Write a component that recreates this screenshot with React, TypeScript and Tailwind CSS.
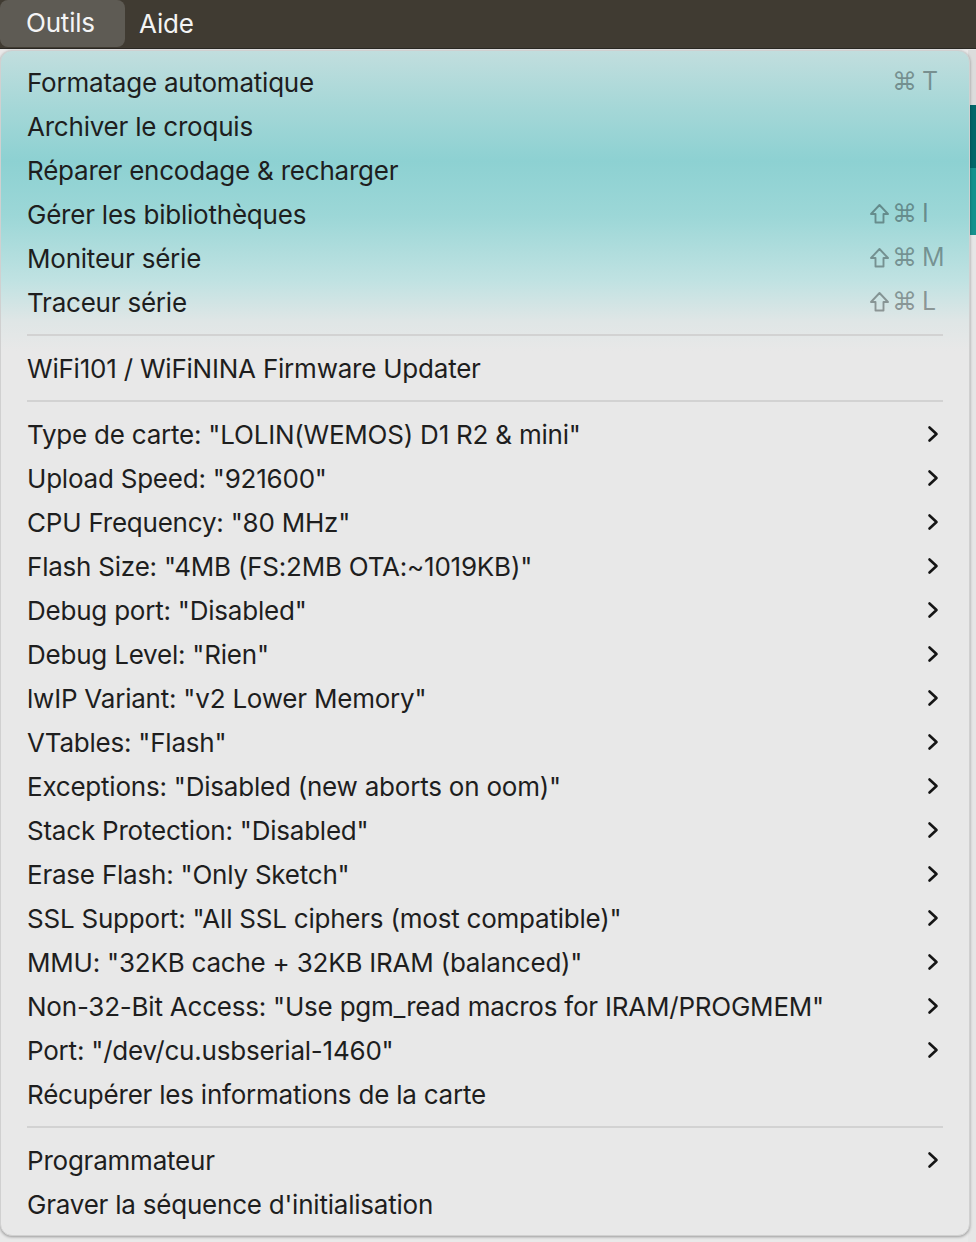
import React from "react";

type Item =
  | { type: "item"; label: string; shortcut?: { shift?: boolean; key: string }; sub?: boolean }
  | { type: "sep" };

const items: Item[] = [
  { type: "item", label: "Formatage automatique", shortcut: { key: "T" } },
  { type: "item", label: "Archiver le croquis" },
  { type: "item", label: "Réparer encodage & recharger" },
  { type: "item", label: "Gérer les bibliothèques", shortcut: { shift: true, key: "I" } },
  { type: "item", label: "Moniteur série", shortcut: { shift: true, key: "M" } },
  { type: "item", label: "Traceur série", shortcut: { shift: true, key: "L" } },
  { type: "sep" },
  { type: "item", label: "WiFi101 / WiFiNINA Firmware Updater" },
  { type: "sep" },
  { type: "item", label: 'Type de carte: "LOLIN(WEMOS) D1 R2 & mini"', sub: true },
  { type: "item", label: 'Upload Speed: "921600"', sub: true },
  { type: "item", label: 'CPU Frequency: "80 MHz"', sub: true },
  { type: "item", label: 'Flash Size: "4MB (FS:2MB OTA:~1019KB)"', sub: true },
  { type: "item", label: 'Debug port: "Disabled"', sub: true },
  { type: "item", label: 'Debug Level: "Rien"', sub: true },
  { type: "item", label: 'lwIP Variant: "v2 Lower Memory"', sub: true },
  { type: "item", label: 'VTables: "Flash"', sub: true },
  { type: "item", label: 'Exceptions: "Disabled (new aborts on oom)"', sub: true },
  { type: "item", label: 'Stack Protection: "Disabled"', sub: true },
  { type: "item", label: 'Erase Flash: "Only Sketch"', sub: true },
  { type: "item", label: 'SSL Support: "All SSL ciphers (most compatible)"', sub: true },
  { type: "item", label: 'MMU: "32KB cache + 32KB IRAM (balanced)"', sub: true },
  { type: "item", label: 'Non-32-Bit Access: "Use pgm_read macros for IRAM/PROGMEM"', sub: true },
  { type: "item", label: 'Port: "/dev/cu.usbserial-1460"', sub: true },
  { type: "item", label: "Récupérer les informations de la carte" },
  { type: "sep" },
  { type: "item", label: "Programmateur", sub: true },
  { type: "item", label: "Graver la séquence d'initialisation" },
];

function Chevron() {
  return (
    <svg width="14" height="20" viewBox="0 0 14 20" className="block">
      <path d="M3.5 3.5 L10.5 10 L3.5 16.5" fill="none" stroke="#151515" strokeWidth="2.6" strokeLinecap="round" strokeLinejoin="round" />
    </svg>
  );
}

function ShiftIcon() {
  return (
    <svg width="21" height="22" viewBox="0 0 21 22" className="block">
      <path d="M10.5 2 L19 11 L14.5 11 L14.5 19.5 L6.5 19.5 L6.5 11 L2 11 Z" fill="none" stroke="currentColor" strokeWidth="1.9" strokeLinejoin="round" />
    </svg>
  );
}

export default function App() {
  return (
    <div
      className="w-[976px] h-[1242px] bg-[#e9e9e9] relative overflow-hidden"
      style={{ fontFamily: "Inter, 'Noto Sans', sans-serif" }}
    >
      {/* menubar */}
      <div className="h-[49px] bg-[#403b32] flex items-stretch border-b border-[#2a2823]">
        <div className="w-[125px] h-[47px] rounded-[8px] bg-[#5e5b54] flex items-center pl-[26px] pb-[2px] text-[26px] tracking-[-0.2px] text-[#f4f4f4]">
          Outils
        </div>
        <div className="flex items-center pl-[14px] pb-[2px] text-[26px] tracking-[-0.2px] text-[#f4f4f4]">Aide</div>
      </div>

      {/* background strip at right */}
      <div className="absolute right-0 top-[50px] w-[8px] h-[1192px] flex flex-col">
        <div className="h-[55px] bg-[#dcdcdc]" />
        <div className="h-[63px] bg-[#036669]" />
        <div className="h-[67px] bg-[#15918e]" />
        <div className="flex-1 bg-[#e6e6e6]" />
      </div>

      {/* menu panel */}
      <div
        className="absolute left-0 top-[50px] w-[970px] h-[1186px] rounded-[12px] shadow-[0_1px_3px_rgba(0,0,0,0.35)] border border-[#d0d0d0] overflow-hidden bg-[#e8e8e8]"
        style={{
          backgroundImage:
            "linear-gradient(to bottom, #c1dede 0px, #a8d8d8 50px, #8dd1d2 110px, #9cd7d7 165px, #c0e2e2 230px, #dfe6e6 270px, #e8e8e8 300px)",
        }}
      >
        <div className="flex flex-col pt-[9px]">
          {items.map((it, i) =>
            it.type === "sep" ? (
              <div key={i} className="h-[22px] flex items-center px-[26px]">
                <div className="h-[2px] w-full bg-[#d2d2d2]" />
              </div>
            ) : (
              <div key={i} className="h-[44px] flex items-center pl-[26px] pr-[29px] text-[26px] text-[#1e1e1e] tracking-[-0.22px]">
                <span className="flex-1 whitespace-nowrap">{it.label}</span>
                {it.shortcut && (
                  <span className="flex items-center gap-[2px] text-[25px] tracking-normal text-black/35">
                    {it.shortcut.shift && <ShiftIcon />}
                    <span>⌘</span>
                    <span className="w-[21px] text-left pl-[3px]">{it.shortcut.key}</span>
                  </span>
                )}
                {it.sub && <Chevron />}
              </div>
            )
          )}
        </div>
      </div>
    </div>
  );
}
